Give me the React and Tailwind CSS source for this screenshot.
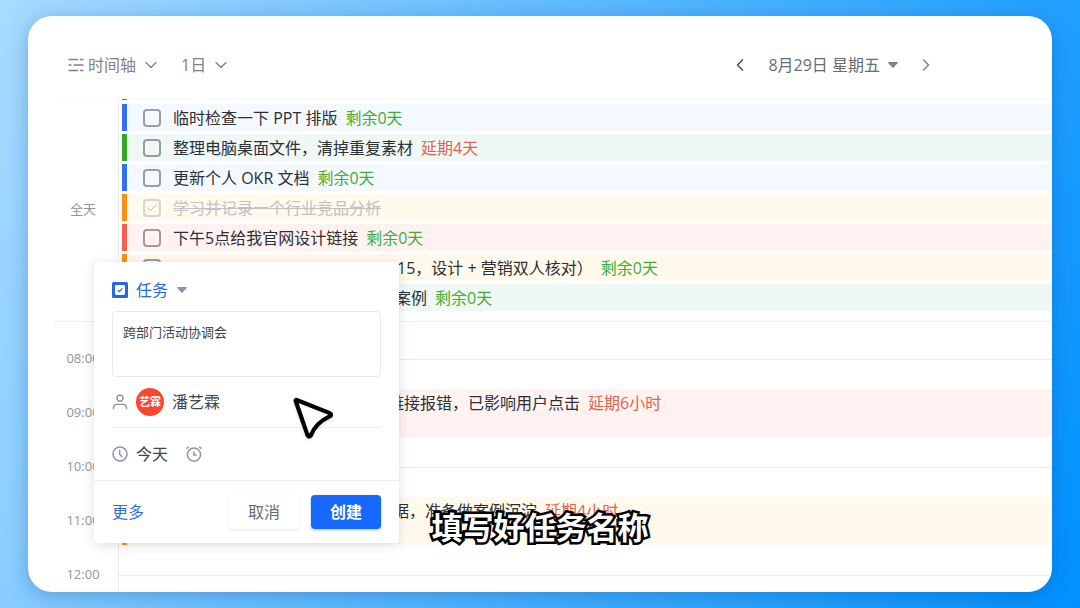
import { useState } from "react";
import { Check, ChevronDown, ChevronLeft, ChevronRight } from "lucide-react";
import clsx from "clsx";

const colors = {
  blue: { bar: "bg-[#3370f0]", row: "bg-[#f4f8ff]" },
  green: { bar: "bg-[#34a822]", row: "bg-[#eff8f5]" },
  yellow: { bar: "bg-[#ff8f0f]", row: "bg-[#fffaeb]" },
  red: { bar: "bg-[#f5604a]", row: "bg-[#fff2f1]" },
};

const allDayTasks = [
  { id: 1, color: "blue", title: "临时检查一下 PPT 排版", tag: "剩余0天" },
  { id: 2, color: "green", title: "整理电脑桌面文件，清掉重复素材", tag: "延期4天", late: true },
  { id: 3, color: "blue", title: "更新个人 OKR 文档", tag: "剩余0天" },
  { id: 4, color: "yellow", title: "学习并记录一个行业竞品分析", done: true },
  { id: 5, color: "red", title: "下午5点给我官网设计链接", tag: "剩余0天" },
  { id: 6, color: "yellow", title: "15，设计 + 营销双人核对）", tag: "剩余0天", indent: "pl-56" },
  { id: 7, color: "green", title: "案例", tag: "剩余0天", indent: "pl-[222px]" },
];

const hours = [
  { time: "08:00" },
  {
    time: "09:00",
    task: { color: "red", title: "链接报错，已影响用户点击", tag: "延期6小时", indent: "pl-[213px]" },
  },
  { time: "10:00" },
  {
    time: "11:00",
    task: { color: "yellow", title: "据，准备做案例沉淀", tag: "延期4小时", indent: "pl-[218px]" },
  },
  { time: "12:00" },
];

function Caret({ className }) {
  return (
    <svg viewBox="0 0 10 6" className={clsx("h-1.5 w-2.5", className)} aria-hidden="true">
      <path d="M0.6 0h8.8c0.5 0 0.7 0.5 0.4 0.9L5.6 5.6c-0.3 0.4-0.9 0.4-1.2 0L0.2 0.9C-0.1 0.5 0.1 0 0.6 0z" fill="currentColor" />
    </svg>
  );
}

function TimelineIcon() {
  return (
    <svg viewBox="0 0 16 14" className="h-3.5 w-4" fill="none" stroke="currentColor" strokeWidth="1.5" aria-hidden="true">
      <path d="M0.5 1.5h9.5M12 1.5h3.5M0.5 7h3M5.5 7h10M0.5 12.5h9.5M12 12.5h3.5" />
    </svg>
  );
}

function TaskIcon() {
  return (
    <svg viewBox="0 0 16 16" className="size-4" aria-hidden="true">
      <rect width="16" height="16" rx="1.5" fill="#2468e5" />
      <rect x="3" y="3" width="10" height="10" rx="1.4" fill="#fff" />
      <path d="M5.6 8l1.8 1.7 3-3.4" fill="none" stroke="#2468e5" strokeWidth="1.2" />
    </svg>
  );
}

function PersonIcon() {
  return (
    <svg viewBox="0 0 16 16" className="size-4" fill="none" stroke="currentColor" strokeWidth="1.4" aria-hidden="true">
      <circle cx="8" cy="4.2" r="3" />
      <path d="M1.5 15.2v-1.4c0-2 1.5-3.4 3.5-3.4h6c2 0 3.5 1.4 3.5 3.4v1.4" />
    </svg>
  );
}

function ClockIcon() {
  return (
    <svg viewBox="0 0 16 16" className="size-4" fill="none" stroke="currentColor" strokeWidth="1.5" aria-hidden="true">
      <circle cx="8" cy="8" r="7" />
      <path d="M7.6 3.8v4.4l2.6 2.8" />
    </svg>
  );
}

function AlarmIcon() {
  return (
    <svg viewBox="0 0 16 16" className="size-4" fill="none" stroke="currentColor" strokeWidth="1.5" aria-hidden="true">
      <circle cx="8" cy="8.6" r="6.6" />
      <path d="M7.8 5.4v3.6h3M0.4 2.6L2.8 0.8M13.2 0.8l2.4 1.8" />
    </svg>
  );
}

function Select({ label, value, className }) {
  return (
    <select
      aria-label={label}
      defaultValue={value}
      className={clsx("cursor-pointer appearance-none bg-transparent leading-6 outline-none", className)}
    >
      <option>{value}</option>
    </select>
  );
}

function Header() {
  return (
    <header className="flex h-[82px] shrink-0 items-center justify-between pt-4 pr-[116px] pl-10 text-[#7c828c]">
      <div className="flex items-center gap-5">
        <div className="flex items-center gap-1">
          <TimelineIcon />
          <Select label="视图" value="时间轴" />
          <ChevronDown className="size-5" strokeWidth={1.6} />
        </div>
        <div className="flex items-center gap-1">
          <Select label="时间范围" value="1日" />
          <ChevronDown className="size-5" strokeWidth={1.6} />
        </div>
      </div>
      <div className="flex items-center gap-4.5">
        <button type="button" aria-label="前一天" className="text-[#50555e]">
          <ChevronLeft className="size-5" strokeWidth={2} />
        </button>
        <button type="button" className="flex items-center gap-2 leading-6 text-[#666c75]">
          8月29日 星期五
          <Caret className="text-[#7c828c]" />
        </button>
        <button type="button" aria-label="后一天">
          <ChevronRight className="size-5" strokeWidth={1.8} />
        </button>
      </div>
    </header>
  );
}

function TaskTag({ task }) {
  if (!task.tag) return null;

  return <span className={task.late ? "text-[#e5604d]" : "text-[#3fae32]"}>{task.tag}</span>;
}

function TaskRow({ task, onToggle }) {
  const color = colors[task.color];

  return (
    <li className={clsx("flex h-[27px]", color.row)}>
      <span className={clsx("w-[5px] shrink-0", color.bar)} />
      <label className="flex items-center gap-3 pl-4 whitespace-nowrap">
        <span className="grid place-items-center">
          <input
            type="checkbox"
            checked={!!task.done}
            onChange={() => onToggle(task.id)}
            className={clsx(
              "col-start-1 row-start-1 size-[18px] appearance-none rounded border-2",
              task.done ? "border-[#d3d4d3]" : "border-[#989da6]"
            )}
          />
          {task.done && (
            <Check className="pointer-events-none col-start-1 row-start-1 size-3 text-[#b9bbbd]" />
          )}
        </span>
        <span className={clsx("flex gap-2", task.indent)}>
          <span className={task.done ? "text-[#bfc1c4] line-through" : "text-[#2b2f36]"}>
            {task.title}
          </span>
          <TaskTag task={task} />
        </span>
      </label>
    </li>
  );
}

function AllDay() {
  const [tasks, setTasks] = useState(allDayTasks);

  function handleToggle(id) {
    setTasks(tasks.map((task) => (task.id === id ? { ...task, done: !task.done } : task)));
  }

  return (
    <section className="flex shrink-0 border-y border-t-[#f9f9fa] border-b-[#ebecee]">
      <div className="flex w-16 shrink-0 items-center justify-center pr-1.5 text-[13px] text-[#8f959e]">
        全天
      </div>
      <div className="min-w-0 flex-1 border-l border-[#ebecee] pb-2.5 pl-[3px]">
        {/* bottom edge of the task scrolled out above */}
        <div className="mb-1 h-px bg-[#fafafa]">
          <div className="h-px w-[5px] bg-[#5b7ba8]" />
        </div>
        <ul className="flex flex-col gap-[3px]">
          {tasks.map((task) => (
            <TaskRow key={task.id} task={task} onToggle={handleToggle} />
          ))}
        </ul>
      </div>
    </section>
  );
}

function HourRow({ time, task }) {
  return (
    <div className="flex h-[54px] shrink-0">
      <div className="flex w-16 shrink-0 items-center justify-center pr-1.5 text-[13px] text-[#8f959e]">
        {time}
      </div>
      <div className="flex min-w-0 flex-1 items-center border-l border-[#ebecee]">
        {task ? (
          <div className={clsx("ml-[3px] flex h-12 flex-1", colors[task.color].row)}>
            <span className={clsx("w-[5px] shrink-0", colors[task.color].bar)} />
            <p className="flex gap-2 pt-0.5 pl-12 leading-6 whitespace-nowrap text-[#2b2f36]">
              <span className={task.indent}>{task.title}</span>
              <span className="text-[#e5604d]">{task.tag}</span>
            </p>
          </div>
        ) : (
          <div className="h-px flex-1 bg-[#ebecee]" />
        )}
      </div>
    </div>
  );
}

function CreateTaskPopup() {
  const [name, setName] = useState("跨部门活动协调会");

  return (
    <form
      onSubmit={(e) => e.preventDefault()}
      className="absolute top-[246px] left-[66px] w-[305px] rounded bg-white shadow-[0_2px_12px_rgba(31,35,41,0.14)]"
    >
      <div className="px-[18px] pt-4">
        <div className="flex items-center gap-2">
          <TaskIcon />
          <Select label="类型" value="任务" className="text-[#2468e5]" />
          <Caret className="text-[#8f959e]" />
        </div>
        <textarea
          aria-label="任务名称"
          value={name}
          onChange={(e) => setName(e.target.value)}
          className="mt-[9px] block h-[66px] w-full resize-none rounded border border-[#e8e9eb] px-2.5 py-2.5 text-[13px] leading-5 text-[#40444b] outline-none"
        />
        <div className="flex h-[51px] items-center gap-2 border-b border-[#ebecee] text-[#8f959e]">
          <PersonIcon />
          <span className="grid size-7 place-items-center rounded-full bg-[#fb4632] text-[11px] font-bold text-white">
            艺霖
          </span>
          <span className="text-[#40444b]">潘艺霖</span>
        </div>
        <div className="flex h-[52px] items-center gap-2 text-[#8f959e]">
          <ClockIcon />
          <button type="button" className="text-[#40444b]">今天</button>
          <button type="button" aria-label="提醒" className="ml-2.5">
            <AlarmIcon />
          </button>
        </div>
      </div>
      <div className="flex items-center gap-3 border-t border-[#ebecee] px-[18px] py-3.5">
        <a href="#more" className="mr-auto text-[#2e6fd6]">更多</a>
        <button
          type="button"
          className="h-[34px] w-[70px] rounded bg-white text-[#646a73] shadow-[0_1px_3px_rgba(31,35,41,0.1)]"
        >
          取消
        </button>
        <button
          type="submit"
          className="h-[34px] w-[70px] rounded bg-[#1768ff] font-bold text-white shadow-[0_1px_3px_rgba(23,104,255,0.4)]"
        >
          创建
        </button>
      </div>
    </form>
  );
}

function Pointer() {
  return (
    <svg
      viewBox="0 0 44 46"
      className="pointer-events-none absolute top-[380px] left-[263px] h-[46px] w-11 drop-shadow"
      aria-hidden="true"
    >
      <path
        d="M5.6 4C4.9 3.8 4.5 4.3 4.7 5L16.6 39.4c0.5 1.5 2.4 1.5 3.1 0.2C23.2 30.8 29.6 24.6 39 20.2c1.4-0.7 1.3-2.5-0.2-3.1z"
        fill="#fff"
        stroke="#000"
        strokeWidth="4.2"
        strokeLinejoin="round"
      />
    </svg>
  );
}

function App() {
  return (
    <div className="relative flex h-screen bg-[linear-gradient(112deg,#a8dbff_0%,#0091ff_100%)] px-7 py-4 font-['Open_Sans','Noto_Sans_CJK_SC',sans-serif] text-base">
      <main className="relative flex min-w-0 flex-1 flex-col overflow-hidden rounded-3xl bg-white shadow-[0_4px_20px_rgba(0,60,130,0.3)]">
        <Header />
        <div className="ml-[26px] flex min-h-0 flex-1 flex-col overflow-hidden">
          <AllDay />
          <div className="flex flex-col">
            <div className="ml-16 h-2.5 border-l border-[#ebecee]" />
            {hours.map((hour) => (
              <HourRow key={hour.time} time={hour.time} task={hour.task} />
            ))}
          </div>
        </div>
        <CreateTaskPopup />
        <Pointer />
      </main>
      {/* subtitle */}
      <p className="pointer-events-none absolute inset-x-0 bottom-14 text-center text-[31px] leading-[50px] font-bold text-white [-webkit-text-stroke:5px_#000] [paint-order:stroke_fill]">
        填写好任务名称
      </p>
    </div>
  );
}

export default App;
